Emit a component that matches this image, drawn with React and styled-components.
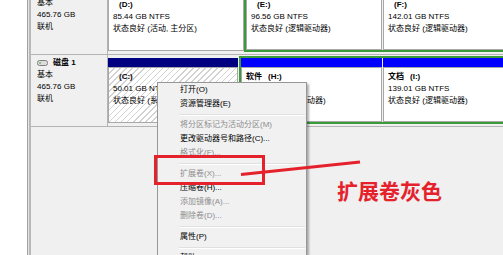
import React from "react";
import styled, { createGlobalStyle } from "styled-components";

const Global = createGlobalStyle`
  html, body { margin: 0; padding: 0; background: #fff; }
  #root { width: 503px; height: 255px; }
`;

const FONT = `"Liberation Sans", "Noto Sans CJK SC", sans-serif`;
const RED = "#e5222b";

const Screen = styled.div`
  position: relative;
  width: 503px;
  height: 255px;
  overflow: hidden;
  display: flex;
  background: #fff;
  font-family: ${FONT};
  font-size: 8px;
  line-height: 12px;
  color: #000;
`;

const Margin = styled.div`
  width: 27px;
  flex: none;
  background: #fff;
`;

const Console = styled.div`
  flex: 1;
  min-width: 0;
  display: flex;
  flex-direction: column;
  background: #f0f0f0;
  border-left: 1px solid #a0a0a0;
  box-shadow: inset 1px 0 0 #e6e6e6, inset 3px 0 0 #b9b9b9;
  padding-left: 3px;
  overflow: hidden;
`;

const DiskList = styled.div`
  margin-top: -17px;
  display: flex;
  flex-direction: column;
`;

const DiskRow = styled.div`
  display: flex;
  height: 71px;
  border-bottom: 1px solid #b4b4b4;
`;

const DiskLabel = styled.div`
  width: 77px;
  flex: none;
  box-sizing: border-box;
  border-right: 1px solid #b4b4b4;
  padding: 2px 0 0 6px;
  white-space: nowrap;
`;

const DiskTitle = styled.div`
  display: flex;
  align-items: center;
  gap: 5px;
  font-weight: bold;
`;

const Partitions = styled.div`
  flex: 1;
  min-width: 0;
  display: flex;
  align-items: flex-start;
  overflow: hidden;
`;

const Slot = styled.div`
  flex: none;
  width: ${(p) => p.$w}px;
  padding-top: ${(p) => (p.$logical ? 0 : 3)}px;
  margin-right: ${(p) => p.$gap || 0}px;
  display: flex;
  flex-direction: column;
`;

const Bar = styled.div`
  height: 9px;
  background: ${(p) => (p.$logical ? "#0000ff" : "#000080")};
`;

const Box = styled.div`
  box-sizing: border-box;
  height: ${(p) => (p.$logical ? 55 : 56)}px;
  border: 1px solid #a8a8a8;
  padding: 3px 0 0 4px;
  white-space: nowrap;
  overflow: hidden;
  background: ${(p) =>
    p.$selected
      ? "repeating-linear-gradient(135deg, #ffffff 0 3.2px, #d2d2d2 3.2px 4.3px)"
      : "#fff"};
`;

const VolName = styled.div`
  display: flex;
  gap: 6px;
  font-weight: bold;
`;

const Extended = styled.div`
  flex: none;
  margin-top: 1px;
  margin-left: ${(p) => p.$ml || 0}px;
  border: 2px solid #3a9b3a;
  display: flex;
  gap: 1px;
`;

const Menu = styled.div`
  position: absolute;
  left: 157px;
  top: 82px;
  width: 150px;
  box-sizing: border-box;
  background: #f1f1f1;
  border: 1px solid #979797;
  box-shadow: 2px 2px 2px rgba(0, 0, 0, 0.3);
  font-family: ${FONT};
  font-size: 8px;
`;

const MenuItem = styled.div`
  height: 14px;
  line-height: 14px;
  padding-left: 22px;
  white-space: nowrap;
  color: ${(p) => (p.$disabled ? "#8e8e8e" : "#000")};
`;

const MenuSep = styled.div`
  height: 1px;
  margin: 3px 1px 2px 21px;
  background: #e0e0e0;
  border-bottom: 1px solid #fff;
`;

const RedBox = styled.div`
  position: absolute;
  left: 154px;
  top: 155px;
  width: 111px;
  height: 30px;
  box-sizing: border-box;
  border: 3px solid ${RED};
`;

const Overlay = styled.svg`
  position: absolute;
  left: 0;
  top: 0;
  pointer-events: none;
`;

const RedText = styled.div`
  position: absolute;
  left: 337px;
  top: 177px;
  font-family: "Noto Sans CJK SC", sans-serif;
  font-weight: 700;
  font-size: 21px;
  line-height: 26px;
  color: ${RED};
  white-space: nowrap;
`;

const DiskIcon = () => (
  <svg width="11" height="6" viewBox="0 0 11 6">
    <rect x="0.5" y="0.5" width="10" height="5" rx="2" fill="#dcdcdc" stroke="#808080" />
    <rect x="2" y="2.5" width="2" height="1" fill="#4a9a4a" />
  </svg>
);

const disks = [
  {
    name: "磁盘 0",
    size: "465.76 GB",
    primary: { w: 136, name: "", letter: "(D:)", size: "85.44 GB NTFS", status: "状态良好 (活动, 主分区)" },
    extMl: 0,
    logical: [
      { w: 136, name: "", letter: "(E:)", size: "96.56 GB NTFS", status: "状态良好 (逻辑驱动器)" },
      { w: 200, name: "", letter: "(F:)", size: "142.01 GB NTFS", status: "状态良好 (逻辑驱动器)" },
    ],
  },
  {
    name: "磁盘 1",
    size: "465.76 GB",
    primary: {
      w: 130,
      gap: 0,
      name: "",
      letter: "(C:)",
      size: "50.01 GB NTFS",
      status: "状态良好 (系统, 启动, 页面文件, 故障转储, 主分区)",
      selected: true,
    },
    extMl: 1,
    logical: [
      { w: 141, name: "软件", letter: "(H:)", size: "126.74 GB NTFS", status: "状态良好 (逻辑驱动器)" },
      { w: 200, name: "文档", letter: "(I:)", size: "139.01 GB NTFS", status: "状态良好 (逻辑驱动器)" },
    ],
  },
];

const PartBody = ({ p, logical }) => (
  <Box $logical={logical} $selected={p.selected}>
    <VolName>
      <span>{p.name}</span>
      <span>{p.letter}</span>
    </VolName>
    <div>{p.size}</div>
    <div>{p.status}</div>
  </Box>
);

const menu = [
  { t: "打开(O)" },
  { t: "资源管理器(E)" },
  { sep: true },
  { t: "将分区标记为活动分区(M)", d: true },
  { t: "更改驱动器号和路径(C)..." },
  { t: "格式化(F)...", d: true },
  { sep: true },
  { t: "扩展卷(X)...", d: true },
  { t: "压缩卷(H)..." },
  { t: "添加镜像(A)...", d: true },
  { t: "删除卷(D)...", d: true },
  { sep: true },
  { t: "属性(P)" },
  { sep: true },
  { t: "帮助(H)" },
];

export default function App() {
  return (
    <>
      <Global />
      <Screen>
        <Margin />
        <Console>
          <DiskList>
            {disks.map((d) => (
              <DiskRow key={d.name}>
                <DiskLabel>
                  <DiskTitle>
                    <DiskIcon />
                    <span>{d.name}</span>
                  </DiskTitle>
                  <div>基本</div>
                  <div>{d.size}</div>
                  <div>联机</div>
                </DiskLabel>
                <Partitions>
                  <Slot $w={d.primary.w}>
                    <Bar />
                    <PartBody p={d.primary} />
                  </Slot>
                  <Extended $ml={d.extMl}>
                    {d.logical.map((p) => (
                      <Slot key={p.letter} $w={p.w} $logical>
                        <Bar $logical />
                        <PartBody p={p} logical />
                      </Slot>
                    ))}
                  </Extended>
                </Partitions>
              </DiskRow>
            ))}
          </DiskList>
        </Console>

        <Menu>
          {menu.map((m, i) =>
            m.sep ? (
              <MenuSep key={i} />
            ) : (
              <MenuItem key={i} $disabled={m.d}>
                {m.t}
              </MenuItem>
            )
          )}
        </Menu>

        <RedBox />
        <Overlay width="503" height="255" viewBox="0 0 503 255">
          <line x1="241" y1="174.5" x2="360" y2="162" stroke={RED} strokeWidth="3" />
        </Overlay>
        <RedText>扩展卷灰色</RedText>
      </Screen>
    </>
  );
}
